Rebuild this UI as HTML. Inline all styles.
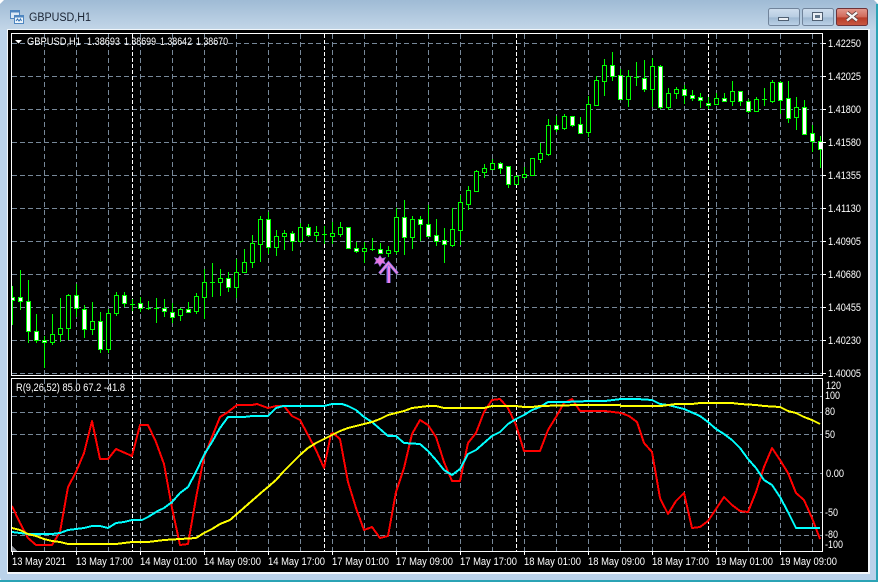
<!DOCTYPE html>
<html><head><meta charset="utf-8"><title>GBPUSD,H1</title>
<style>html,body{margin:0;padding:0;background:#fff;width:880px;height:582px;overflow:hidden}svg{display:block}
text{font-family:"Liberation Sans",sans-serif;font-size:11px;fill:#fff}</style></head>
<body>
<svg width="880" height="582" viewBox="0 0 880 582" xmlns="http://www.w3.org/2000/svg">
<defs>
<linearGradient id="t" x1="0" y1="0" x2="0" y2="1"><stop offset="0" stop-color="#9fbbd5"/><stop offset="1" stop-color="#c3d6e8"/></linearGradient>
<linearGradient id="b" x1="0" y1="0" x2="0" y2="1"><stop offset="0" stop-color="#cfdeee"/><stop offset=".5" stop-color="#b8cde2"/><stop offset=".55" stop-color="#9fb9d2"/><stop offset="1" stop-color="#bcd2e8"/></linearGradient>
<linearGradient id="r" x1="0" y1="0" x2="0" y2="1"><stop offset="0" stop-color="#e39a8e"/><stop offset=".5" stop-color="#d0695a"/><stop offset=".55" stop-color="#b83c28"/><stop offset="1" stop-color="#c85a44"/></linearGradient>
<clipPath id="m"><rect x="12" y="34" width="810" height="341"/></clipPath>
<clipPath id="s"><rect x="12" y="379" width="810" height="172"/></clipPath>
</defs>
<!-- window -->
<rect x="0" y="0" width="878" height="582" rx="5" fill="#bad2ea"/>
<rect x="0" y="0" width="878" height="30" fill="url(#t)"/>
<path d="M0 0h4L0 4z" fill="#fff"/><path d="M878 0h-4l4 4z" fill="#fff"/>
<rect x="0" y="580" width="878" height="2" fill="#2ba3b5"/>
<rect x="876" y="4" width="2" height="578" fill="#2ba3b5"/>
<rect x="7" y="29" width="863" height="545" fill="#f2f6fa"/>
<rect x="8" y="30" width="860" height="542" fill="#000"/>
<!-- icon -->
<rect x="10.500" y="10.500" width="9" height="8" fill="#dce9f6" stroke="#4f86c0"/>
<rect x="10.500" y="10.500" width="9" height="2" fill="#4f86c0"/>
<rect x="14.500" y="15.500" width="9" height="8" fill="#eef5fb" stroke="#4f86c0"/>
<rect x="14.500" y="15.500" width="9" height="2" fill="#4f86c0"/>
<path d="M16 21l1.500-2 1.500 2 1.500-2 1 2" fill="none" stroke="#2e6fb3"/>
<text x="29" y="21" textLength="62" lengthAdjust="spacingAndGlyphs" style="font-size:11.500px;fill:#1b2433">GBPUSD,H1</text>
<!-- buttons -->
<rect x="768.500" y="8.500" width="31" height="17" rx="2" fill="url(#b)" stroke="#71849b"/>
<rect x="778.500" y="17.500" width="10" height="3" fill="#e9eef4" stroke="#4f5f72"/>
<rect x="802.500" y="8.500" width="31" height="17" rx="2" fill="url(#b)" stroke="#71849b"/>
<rect x="812.500" y="12.500" width="10" height="8" fill="#e9eef4" stroke="#4f5f72"/>
<rect x="815" y="15" width="5" height="3" fill="#5f7388"/>
<rect x="836.500" y="8.500" width="31" height="17" rx="2" fill="url(#r)" stroke="#6e3238"/>
<path d="M847 12.500l10 8M857 12.500l-10 8" stroke="#5a3a3a" stroke-width="4"/>
<path d="M847 12.500l10 8M857 12.500l-10 8" stroke="#f4f4f4" stroke-width="2.400"/>
<!-- frames -->
<rect x="11.500" y="33.500" width="811" height="342" fill="#000" stroke="#fff"/>
<rect x="11.500" y="378.500" width="811" height="173" fill="#000" stroke="#fff"/>
<!-- grid -->
<g stroke="#778899" stroke-dasharray="5 3" fill="none" shape-rendering="crispEdges">
<path d="M12 43.500H822M12 76.500H822M12 109.500H822M12 142.500H822M12 175.500H822M12 208.500H822M12 241.500H822M12 274.500H822M12 307.500H822M12 340.500H822M12 373.500H822"/>
<path d="M12 396.500H822M12 412.500H822M12 434.500H822M12 473.500H822M12 512.500H822M12 535.500H822"/>
<path d="M44.500 34V375M76.500 34V375M108.500 34V375M140.500 34V375M172.500 34V375M204.500 34V375M236.500 34V375M268.500 34V375M300.500 34V375M332.500 34V375M364.500 34V375M396.500 34V375M428.500 34V375M460.500 34V375M492.500 34V375M524.500 34V375M556.500 34V375M588.500 34V375M620.500 34V375M652.500 34V375M684.500 34V375M716.500 34V375M748.500 34V375M780.500 34V375M812.500 34V375"/>
<path d="M44.500 379V551M76.500 379V551M108.500 379V551M140.500 379V551M172.500 379V551M204.500 379V551M236.500 379V551M268.500 379V551M300.500 379V551M332.500 379V551M364.500 379V551M396.500 379V551M428.500 379V551M460.500 379V551M492.500 379V551M524.500 379V551M556.500 379V551M588.500 379V551M620.500 379V551M652.500 379V551M684.500 379V551M716.500 379V551M748.500 379V551M780.500 379V551M812.500 379V551"/>
</g>
<g stroke="#fff" stroke-dasharray="4 2" fill="none" shape-rendering="crispEdges">
<path d="M132.500 34V551M324.500 34V551M516.500 34V551M708.500 34V551"/>
</g>
<!-- candles -->
<g clip-path="url(#m)" shape-rendering="crispEdges" stroke="#00ff00">
<path fill="none" d="M12.500 286V325M20.500 270V310M28.500 280V343M36.500 314V343M44.500 336V368M52.500 314V345M60.500 298V342M68.500 294V340M76.500 284V317M84.500 305V338M92.500 302V335M100.500 312V353M108.500 309V353M116.500 292V316M124.500 292V307M132.500 299V311M140.500 297V312M148.500 301V310M156.500 298V323M164.500 299V317M172.500 303V323M180.500 308V321M188.500 302V313M196.500 293V314M204.500 269V319M212.500 263V297M220.500 269V296M228.500 272V292M236.500 259V298M244.500 249V273M252.500 235V268M260.500 216V262M268.500 212V254M276.500 230V256M284.500 230V250M292.500 231V251M300.500 223V243M308.500 224V237M316.500 226V242M324.500 226V244M332.500 222V244M340.500 222V237M348.500 227V248M356.500 242V253M364.500 242V263M372.500 238V251M380.500 243V254M388.500 246V257M396.500 208V254M404.500 200V255M412.500 216V249M420.500 216V241M428.500 205V236M436.500 219V246M444.500 228V263M452.500 208V247M460.500 195V245M468.500 186V210M476.500 170V192M484.500 164V178M492.500 159V170M500.500 162V174M508.500 166V188M516.500 175V185M524.500 167V177M532.500 158V175M540.500 143V163M548.500 119V156M556.500 116V132M564.500 114V130M572.500 116V127M580.500 117V133M588.500 96V137M596.500 76V105M604.500 59V96M612.500 52V81M620.500 69V99M628.500 70V107M636.500 62V86M644.500 60V92M652.500 58V107M660.500 65V109M668.500 88V110M676.500 87V99M684.500 85V104M692.500 90V101M700.500 93V108M708.500 97V109M716.500 93V104M724.500 93V102M732.500 81V106M740.500 91V106M748.500 99V113M756.500 97V112M764.500 88V106M772.500 80V103M780.500 81V114M788.500 81V123M796.500 97V130M804.500 100V135M812.500 125V152M820.500 136V168"/>
<path fill="none" d="M130 304.500h5M146 308.500h5M154 308.500h5M210 282.500h5M322 234.500h5M370 249.500h5M634 77.500h5M762 99.500h5"/>
<path fill="#000" d="M50.500 334.500h4v8h-4zM58.500 328.500h4v6h-4zM66.500 295.500h4v33h-4zM90.500 321.500h4v8h-4zM106.500 313.500h4v36h-4zM114.500 295.500h4v18h-4zM178.500 309.500h4v6h-4zM194.500 296.500h4v15h-4zM202.500 282.500h4v15h-4zM218.500 278.500h4v4h-4zM234.500 272.500h4v15h-4zM242.500 262.500h4v10h-4zM250.500 243.500h4v19h-4zM258.500 219.500h4v25h-4zM274.500 236.500h4v11h-4zM282.500 233.500h4v3h-4zM298.500 227.500h4v14h-4zM314.500 232.500h4v3h-4zM330.500 233.500h4v3h-4zM338.500 227.500h4v7h-4zM362.500 248.500h4v3h-4zM386.500 250.500h4v3h-4zM394.500 217.500h4v34h-4zM410.500 219.500h4v18h-4zM450.500 229.500h4v16h-4zM458.500 202.500h4v28h-4zM466.500 190.500h4v14h-4zM474.500 171.500h4v20h-4zM482.500 168.500h4v4h-4zM490.500 163.500h4v6h-4zM514.500 176.500h4v8h-4zM522.500 174.500h4v3h-4zM530.500 158.500h4v17h-4zM538.500 153.500h4v6h-4zM546.500 125.500h4v29h-4zM562.500 116.500h4v12h-4zM586.500 104.500h4v28h-4zM594.500 80.500h4v25h-4zM602.500 65.500h4v16h-4zM626.500 76.500h4v23h-4zM650.500 66.500h4v23h-4zM666.500 93.500h4v14h-4zM674.500 89.500h4v4h-4zM714.500 98.500h4v6h-4zM730.500 91.500h4v10h-4zM754.500 99.500h4v12h-4zM770.500 82.500h4v19h-4zM794.500 107.500h4v10h-4z"/>
<path fill="#fff" d="M10.500 297.500h4v3h-4zM18.500 297.500h4v4h-4zM26.500 301.500h4v30h-4zM34.500 331.500h4v9h-4zM42.500 340.500h4v2h-4zM74.500 295.500h4v13h-4zM82.500 309.500h4v20h-4zM98.500 321.500h4v28h-4zM122.500 295.500h4v8h-4zM138.500 303.500h4v5h-4zM162.500 308.500h4v3h-4zM170.500 312.500h4v5h-4zM186.500 309.500h4v3h-4zM226.500 278.500h4v9h-4zM266.500 219.500h4v28h-4zM290.500 233.500h4v8h-4zM306.500 227.500h4v8h-4zM346.500 227.500h4v21h-4zM354.500 248.500h4v3h-4zM378.500 249.500h4v4h-4zM402.500 217.500h4v20h-4zM418.500 219.500h4v5h-4zM426.500 224.500h4v12h-4zM434.500 235.500h4v6h-4zM442.500 240.500h4v4h-4zM498.500 163.500h4v5h-4zM506.500 166.500h4v18h-4zM554.500 125.500h4v4h-4zM570.500 116.500h4v9h-4zM578.500 124.500h4v9h-4zM610.500 65.500h4v11h-4zM618.500 75.500h4v24h-4zM642.500 78.500h4v11h-4zM658.500 66.500h4v41h-4zM682.500 89.500h4v6h-4zM690.500 95.500h4v3h-4zM698.500 97.500h4v3h-4zM706.500 103.500h4v2h-4zM722.500 98.500h4v3h-4zM738.500 91.500h4v10h-4zM746.500 101.500h4v10h-4zM778.500 82.500h4v18h-4zM786.500 98.500h4v20h-4zM802.500 107.500h4v27h-4zM810.500 133.500h4v8h-4zM818.500 141.500h4v8h-4z"/>
</g>
<!-- star and arrow -->
<polygon points="380,255.500 382,258.500 385.500,257.500 383.800,260.700 385.500,264 382,263 380,266.500 378,263 374.500,264 376.200,260.700 374.500,257.500 378,258.500" fill="#e878e0" stroke="#8a5fd8" stroke-width=".6"/>
<path d="M388.500 263V283" stroke="#8a70f0" stroke-width="4" fill="none"/>
<path d="M389 263V283" stroke="#f080e8" stroke-width="2" fill="none"/>
<path d="M379.500 273.500L388.500 263L397.500 273.500" stroke="#8a70f0" stroke-width="3.200" fill="none"/>
<path d="M379.500 273.500L388.500 263L397.500 273.500" stroke="#f088d8" stroke-width="1.600" fill="none"/>
<!-- indicator -->
<g clip-path="url(#s)" fill="none" stroke-width="2" shape-rendering="crispEdges" stroke-linejoin="round">
<polygon points="12,546 17,551 12,551" fill="#8a8f96" stroke="none"/>
<polyline stroke="#ff0000" points="12,506 20,523 28,538 36,545 52,545 60,532 68,487 76,472 84,453 92,421 100,459 108,459 116,449 132,456 140,425 148,425 156,442 164,464 172,508 180,545 188,544 196,498 204,457 212,437 220,417 228,412 237,405 252,405 257,404 268,408 276,406 284,406 292,416 300,420 308,435 316,450 324,468 331,434 333,433 340,439 348,482 356,508 364,530 372,527 380,538 388,536 396,492 404,468 412,434 420,420 428,425 436,437 444,462 452,481 460,481 468,443 476,433 484,412 492,400 500,399 508,408 516,425 524,451 540,451 548,430 556,417 564,403 572,399 580,411 605,411 621,413 629,416 637,422 644,443 652,452 660,498 668,514 676,501 684,493 692,528 700,527 708,521 724,497 732,505 740,511 748,512 756,492 764,467 772,448 780,460 788,473 796,493 804,500 812,518 820,539"/>
<polyline stroke="#00ffff" points="12,532 20,533 28,534 52,534 60,533 68,530 84,528 92,526 100,526 108,528 116,523 124,522 132,520 142,520 148,517 156,512 164,508 172,502 180,493 188,487 196,472 204,455 212,442 220,428 228,417 244,417 252,416 268,416 276,408 283,406 324,406 332,404 342,404 348,406 356,410 364,417 372,422 380,429 388,436 396,436 404,443 420,444 428,451 436,460 444,470 452,475 460,469 468,454 476,450 484,443 492,436 500,432 508,424 516,419 524,415 532,410 540,407 548,402 564,402 590,401 605,401 621,399 637,399 652,400 660,404 668,405 684,409 700,416 708,422 716,429 724,434 732,440 740,448 748,459 756,468 764,480 772,485 780,497 788,512 796,528 820,528"/>
<polyline stroke="#ffff00" points="12,528 20,530 28,534 36,536 44,539 52,541 60,542 68,544 116,544 124,543 132,542 148,542 164,540 180,539 196,538 204,533 212,529 220,524 230,520 238,513 246,506 254,499 262,492 268,487 276,480 284,471 292,463 300,455 308,448 316,443 324,439 332,435 340,431 348,428 356,426 364,424 372,422 380,419 388,415 396,413 404,411 412,408 420,407 428,406 436,406 444,408 484,408 492,406 516,406 524,407 532,407 540,406 580,405 620,405 621,406 661,406 676,404 692,404 700,403 732,403 740,404 756,405 764,406 780,407 788,411 796,413 804,417 812,420 820,424"/>
</g>
<!-- ticks -->
<g stroke="#fff" shape-rendering="crispEdges" fill="none">
<path d="M822 43.500h4M822 76.500h4M822 109.500h4M822 142.500h4M822 175.500h4M822 208.500h4M822 241.500h4M822 274.500h4M822 307.500h4M822 340.500h4M822 373.500h4"/>
<path d="M12.500 551v4M76.500 551v4M140.500 551v4M204.500 551v4M268.500 551v4M332.500 551v4M396.500 551v4M460.500 551v4M524.500 551v4M588.500 551v4M652.500 551v4M716.500 551v4M780.500 551v4"/>
</g>
<!-- header text -->
<polygon points="15,40 22,40 18.500,43.500" fill="#fff"/>
<g>
<text x="27" y="45" textLength="54" lengthAdjust="spacingAndGlyphs">GBPUSD,H1</text>
<text x="87" y="45" textLength="33" lengthAdjust="spacingAndGlyphs">1.38693</text>
<text x="124" y="45" textLength="32" lengthAdjust="spacingAndGlyphs">1.38699</text>
<text x="160" y="45" textLength="32" lengthAdjust="spacingAndGlyphs">1.38642</text>
<text x="196" y="45" textLength="32" lengthAdjust="spacingAndGlyphs">1.38670</text>
<text x="16" y="391" textLength="109" lengthAdjust="spacingAndGlyphs">R(9,26,52) 85.0 67.2 -41.8</text>
</g>
<!-- price axis -->
<g>
<text x="828" y="47" textLength="33" lengthAdjust="spacingAndGlyphs">1.42250</text>
<text x="828" y="80" textLength="33" lengthAdjust="spacingAndGlyphs">1.42025</text>
<text x="828" y="113" textLength="33" lengthAdjust="spacingAndGlyphs">1.41800</text>
<text x="828" y="146" textLength="33" lengthAdjust="spacingAndGlyphs">1.41580</text>
<text x="828" y="179" textLength="33" lengthAdjust="spacingAndGlyphs">1.41355</text>
<text x="828" y="212" textLength="33" lengthAdjust="spacingAndGlyphs">1.41130</text>
<text x="828" y="245" textLength="33" lengthAdjust="spacingAndGlyphs">1.40905</text>
<text x="828" y="278" textLength="33" lengthAdjust="spacingAndGlyphs">1.40680</text>
<text x="828" y="311" textLength="33" lengthAdjust="spacingAndGlyphs">1.40455</text>
<text x="828" y="344" textLength="33" lengthAdjust="spacingAndGlyphs">1.40230</text>
<text x="828" y="377" textLength="33" lengthAdjust="spacingAndGlyphs">1.40005</text>
<text x="826" y="389" textLength="15" lengthAdjust="spacingAndGlyphs">120</text>
<text x="825" y="399" textLength="15" lengthAdjust="spacingAndGlyphs">100</text>
<text x="825" y="415" textLength="10" lengthAdjust="spacingAndGlyphs">80</text>
<text x="825" y="438" textLength="10" lengthAdjust="spacingAndGlyphs">50</text>
<text x="826" y="477" textLength="18" lengthAdjust="spacingAndGlyphs">0.00</text>
<text x="825" y="516" textLength="13" lengthAdjust="spacingAndGlyphs">-50</text>
<text x="825" y="538" textLength="13" lengthAdjust="spacingAndGlyphs">-80</text>
<text x="825" y="548" textLength="18" lengthAdjust="spacingAndGlyphs">-100</text>
</g>
<!-- time axis -->
<g>
<text x="12" y="565" textLength="54" lengthAdjust="spacingAndGlyphs">13 May 2021</text>
<text x="76" y="565" textLength="57" lengthAdjust="spacingAndGlyphs">13 May 17:00</text>
<text x="140" y="565" textLength="57" lengthAdjust="spacingAndGlyphs">14 May 01:00</text>
<text x="204" y="565" textLength="57" lengthAdjust="spacingAndGlyphs">14 May 09:00</text>
<text x="268" y="565" textLength="57" lengthAdjust="spacingAndGlyphs">14 May 17:00</text>
<text x="332" y="565" textLength="57" lengthAdjust="spacingAndGlyphs">17 May 01:00</text>
<text x="396" y="565" textLength="57" lengthAdjust="spacingAndGlyphs">17 May 09:00</text>
<text x="460" y="565" textLength="57" lengthAdjust="spacingAndGlyphs">17 May 17:00</text>
<text x="524" y="565" textLength="57" lengthAdjust="spacingAndGlyphs">18 May 01:00</text>
<text x="588" y="565" textLength="57" lengthAdjust="spacingAndGlyphs">18 May 09:00</text>
<text x="652" y="565" textLength="57" lengthAdjust="spacingAndGlyphs">18 May 17:00</text>
<text x="716" y="565" textLength="57" lengthAdjust="spacingAndGlyphs">19 May 01:00</text>
<text x="780" y="565" textLength="57" lengthAdjust="spacingAndGlyphs">19 May 09:00</text>
</g>
</svg>
</body></html>
